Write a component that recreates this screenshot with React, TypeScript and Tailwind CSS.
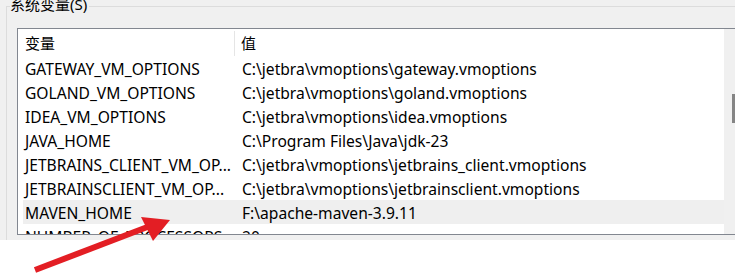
const rows = [
  { name: 'GATEWAY_VM_OPTIONS', value: 'C:\\jetbra\\vmoptions\\gateway.vmoptions' },
  { name: 'GOLAND_VM_OPTIONS', value: 'C:\\jetbra\\vmoptions\\goland.vmoptions' },
  { name: 'IDEA_VM_OPTIONS', value: 'C:\\jetbra\\vmoptions\\idea.vmoptions' },
  { name: 'JAVA_HOME', value: 'C:\\Program Files\\Java\\jdk-23' },
  { name: 'JETBRAINS_CLIENT_VM_OP...', value: 'C:\\jetbra\\vmoptions\\jetbrains_client.vmoptions' },
  { name: 'JETBRAINSCLIENT_VM_OP...', value: 'C:\\jetbra\\vmoptions\\jetbrainsclient.vmoptions' },
  { name: 'MAVEN_HOME', value: 'F:\\apache-maven-3.9.11', hover: true },
  { name: 'NUMBER_OF_PROCESSORS', value: '20' },
];

export default function App() {
  return (
    <div
      className="relative w-[735px] h-[275px] overflow-hidden bg-white text-black text-[15.6px]"
      style={{ fontFamily: '"Noto Sans", "Noto Sans CJK SC", sans-serif' }}
    >
      <div className="h-[240px] bg-[#f0f0f0] pl-[6px] pt-[6px]">
        <div className="relative h-full border-l border-t border-[#dcdcdc] pl-[10px] pt-[21px]">
          <span className="absolute left-[3px] top-[-12px] bg-[#f0f0f0] pr-[2px] leading-[18px] text-[15px]">系统变量(S)</span>

          <div className="flex w-[740px] h-[207px] border border-[#828790] bg-white">
            <div className="flex flex-col w-[706px] overflow-hidden">
              <div className="flex h-[27px] shrink-0 items-center pt-[1px] text-[15px]">
                <div className="flex w-[217px] h-[25px] items-center border-r border-[#e5e5e5] pl-[7px]">变量</div>
                <div className="pl-[6px]">值</div>
              </div>
              {rows.map((r) => (
                <div
                  key={r.name}
                  className={`flex h-[24px] shrink-0 items-center pt-[3px] ml-[5px] ${r.hover ? 'bg-[#efefef]' : ''}`}
                >
                  <div className="w-[219px] pl-[2px] whitespace-nowrap overflow-hidden">{r.name}</div>
                  <div className="whitespace-nowrap">{r.value}</div>
                </div>
              ))}
            </div>
            <div className="relative w-[17px] bg-[#f0f0f0]">
              <div className="absolute left-[8px] top-[65px] w-[4px] h-[29px] bg-[#858585]"></div>
            </div>
          </div>
        </div>
      </div>

      <svg className="absolute inset-0 pointer-events-none" width="735" height="275" viewBox="0 0 735 275">
        <line x1="35" y1="270" x2="150" y2="226" stroke="#e31e24" strokeWidth="6" />
        <polygon points="141,217 170,220 153,241" fill="#e31e24" />
      </svg>
    </div>
  );
}
